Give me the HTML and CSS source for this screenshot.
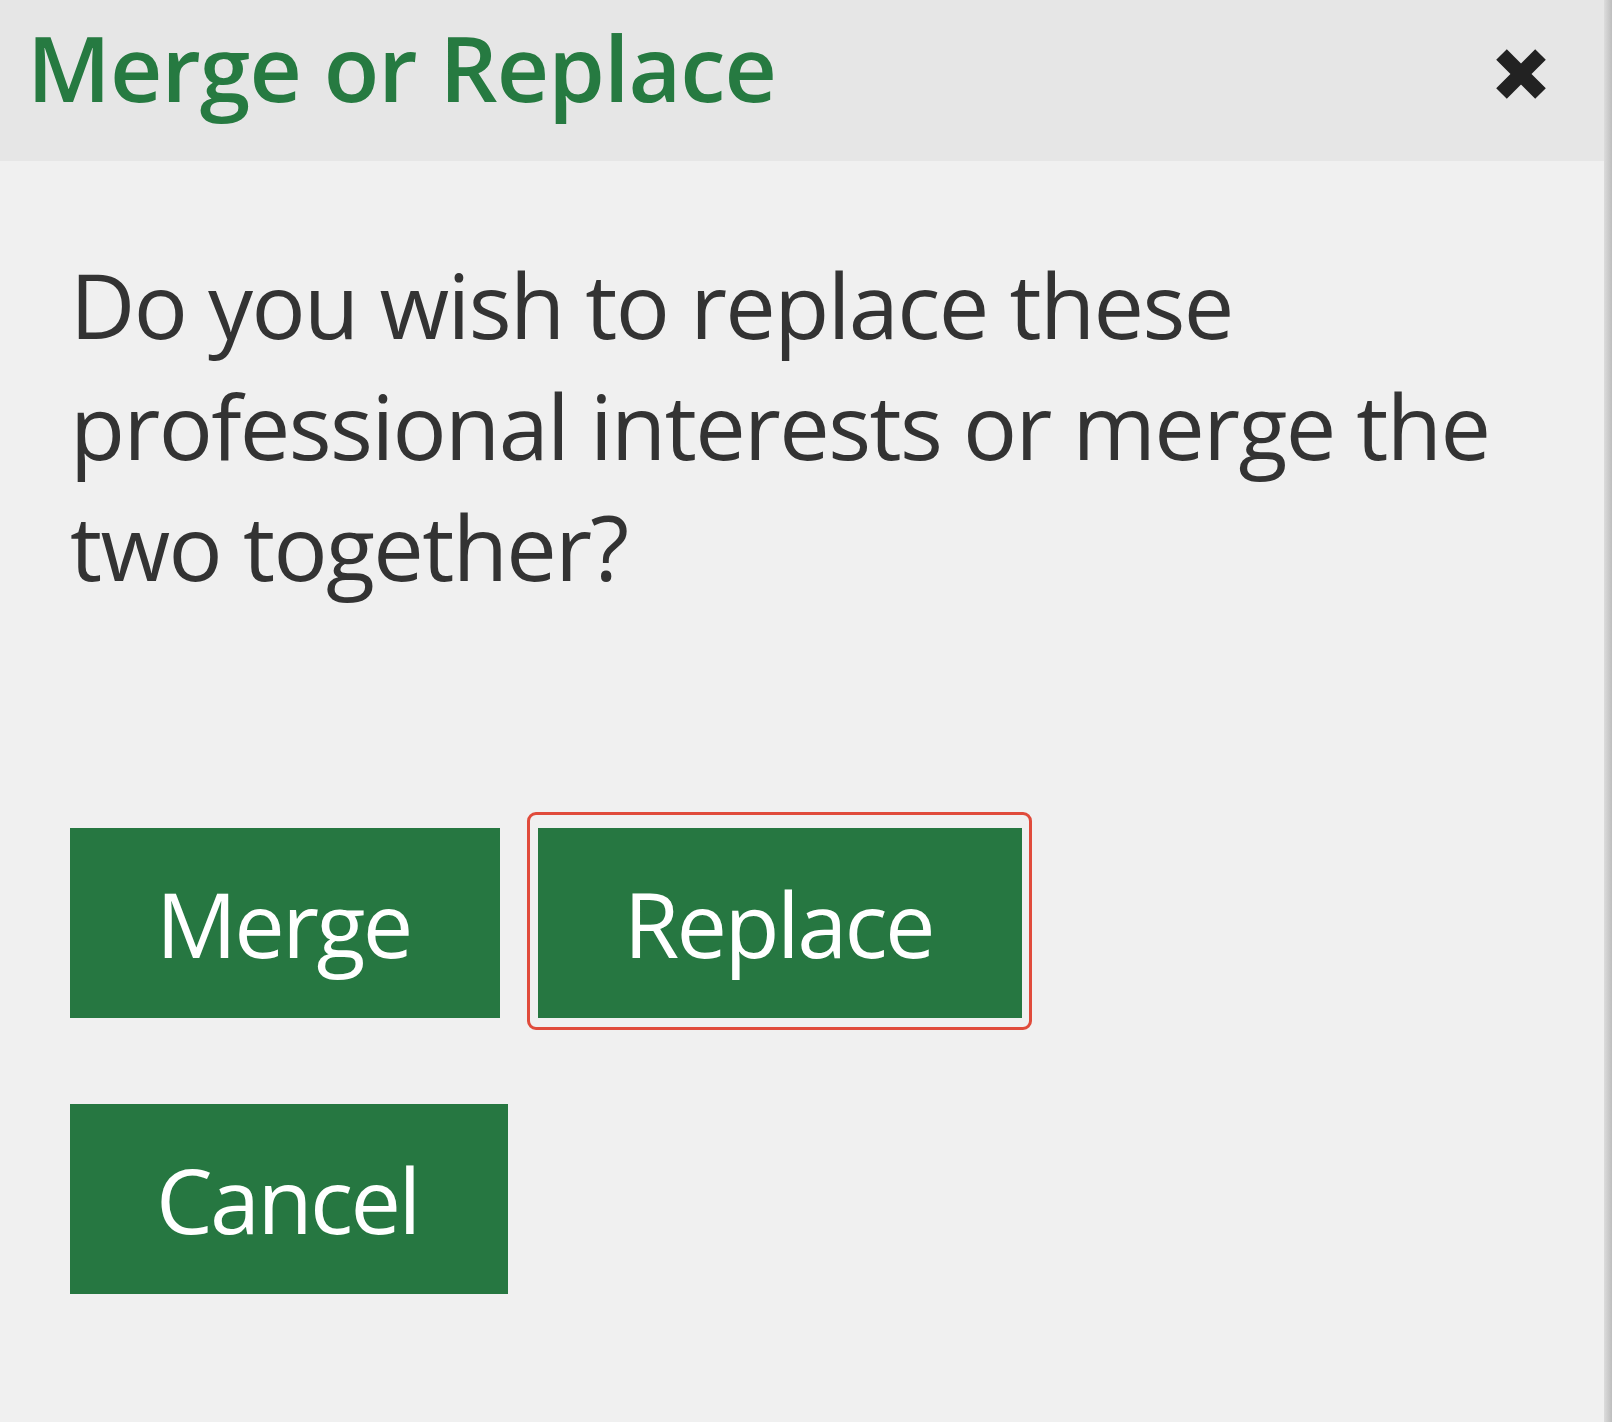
FILE: index.html
```html
<!DOCTYPE html>
<html lang="en">
<head>
<meta charset="utf-8">
<title>Merge or Replace</title>
<link rel="stylesheet" href="styles.css">
</head>
<body>
<div class="frame">
  <div class="dialog">
    <div class="header">
      <h1 class="title">Merge or Replace</h1>
      <button class="close" aria-label="Close">
        <svg viewBox="0 0 52 52" width="52" height="52" aria-hidden="true">
          <path d="M6.5 6.5 L45.5 45.5 M45.5 6.5 L6.5 45.5" stroke="#222" stroke-width="15" stroke-linecap="butt" fill="none"/>
        </svg>
      </button>
    </div>
    <div class="body">
      <p class="message">Do you wish to replace these professional interests or merge the two together?</p>
      <div class="actions">
        <button class="btn">Merge</button>
        <button class="btn btn-focus">Replace</button>
      </div>
      <div class="actions actions-second">
        <button class="btn">Cancel</button>
      </div>
    </div>
  </div>
  <div class="edge"></div>
</div>
</body>
</html>
```
FILE: styles.css
```css
html, body {
  margin: 0;
  padding: 0;
  height: 100%;
}
body {
  background: #f0f0f0;
  font-family: "Open Sans", "Liberation Sans", sans-serif;
}
.frame {
  display: flex;
  min-height: 100%;
}
.dialog {
  flex: 1;
  background: #f0f0f0;
}
.edge {
  width: 8px;
  background: linear-gradient(to right, #dcdcdc, #bdbdbd);
}
.header {
  height: 161px;
  box-sizing: border-box;
  background: #e6e6e6;
  display: flex;
  justify-content: space-between;
  align-items: flex-start;
  padding: 22px 57px 0 27px;
}
.title {
  margin: 0;
  font-size: 91px;
  line-height: 91px;
  font-weight: 600;
  letter-spacing: -0.9px;
  color: #267a41;
}
.close {
  margin-top: 26px;
  border: 0;
  padding: 0;
  background: transparent;
  width: 52px;
  height: 52px;
  display: flex;
}
.body {
  padding: 83px 62px 0 70px;
}
.message {
  margin: 0;
  font-size: 90px;
  line-height: 121px;
  letter-spacing: -1.6px;
  color: #333333;
}
.actions {
  display: flex;
  gap: 38px;
  margin-top: 221px;
}
.actions-second {
  margin-top: 86px;
}
.btn {
  position: relative;
  height: 190px;
  padding: 0 89px 0 86px;
  border: 0;
  border-radius: 0;
  background: #267741;
  color: #ffffff;
  font-family: "Open Sans", "Liberation Sans", sans-serif;
  font-size: 90px;
  line-height: 190px;
  letter-spacing: -2.6px;
}
.btn-focus::after {
  content: "";
  position: absolute;
  top: -16px;
  bottom: -12px;
  left: -11px;
  right: -10px;
  border: 3px solid #e04b3b;
  border-radius: 9px;
}
```
